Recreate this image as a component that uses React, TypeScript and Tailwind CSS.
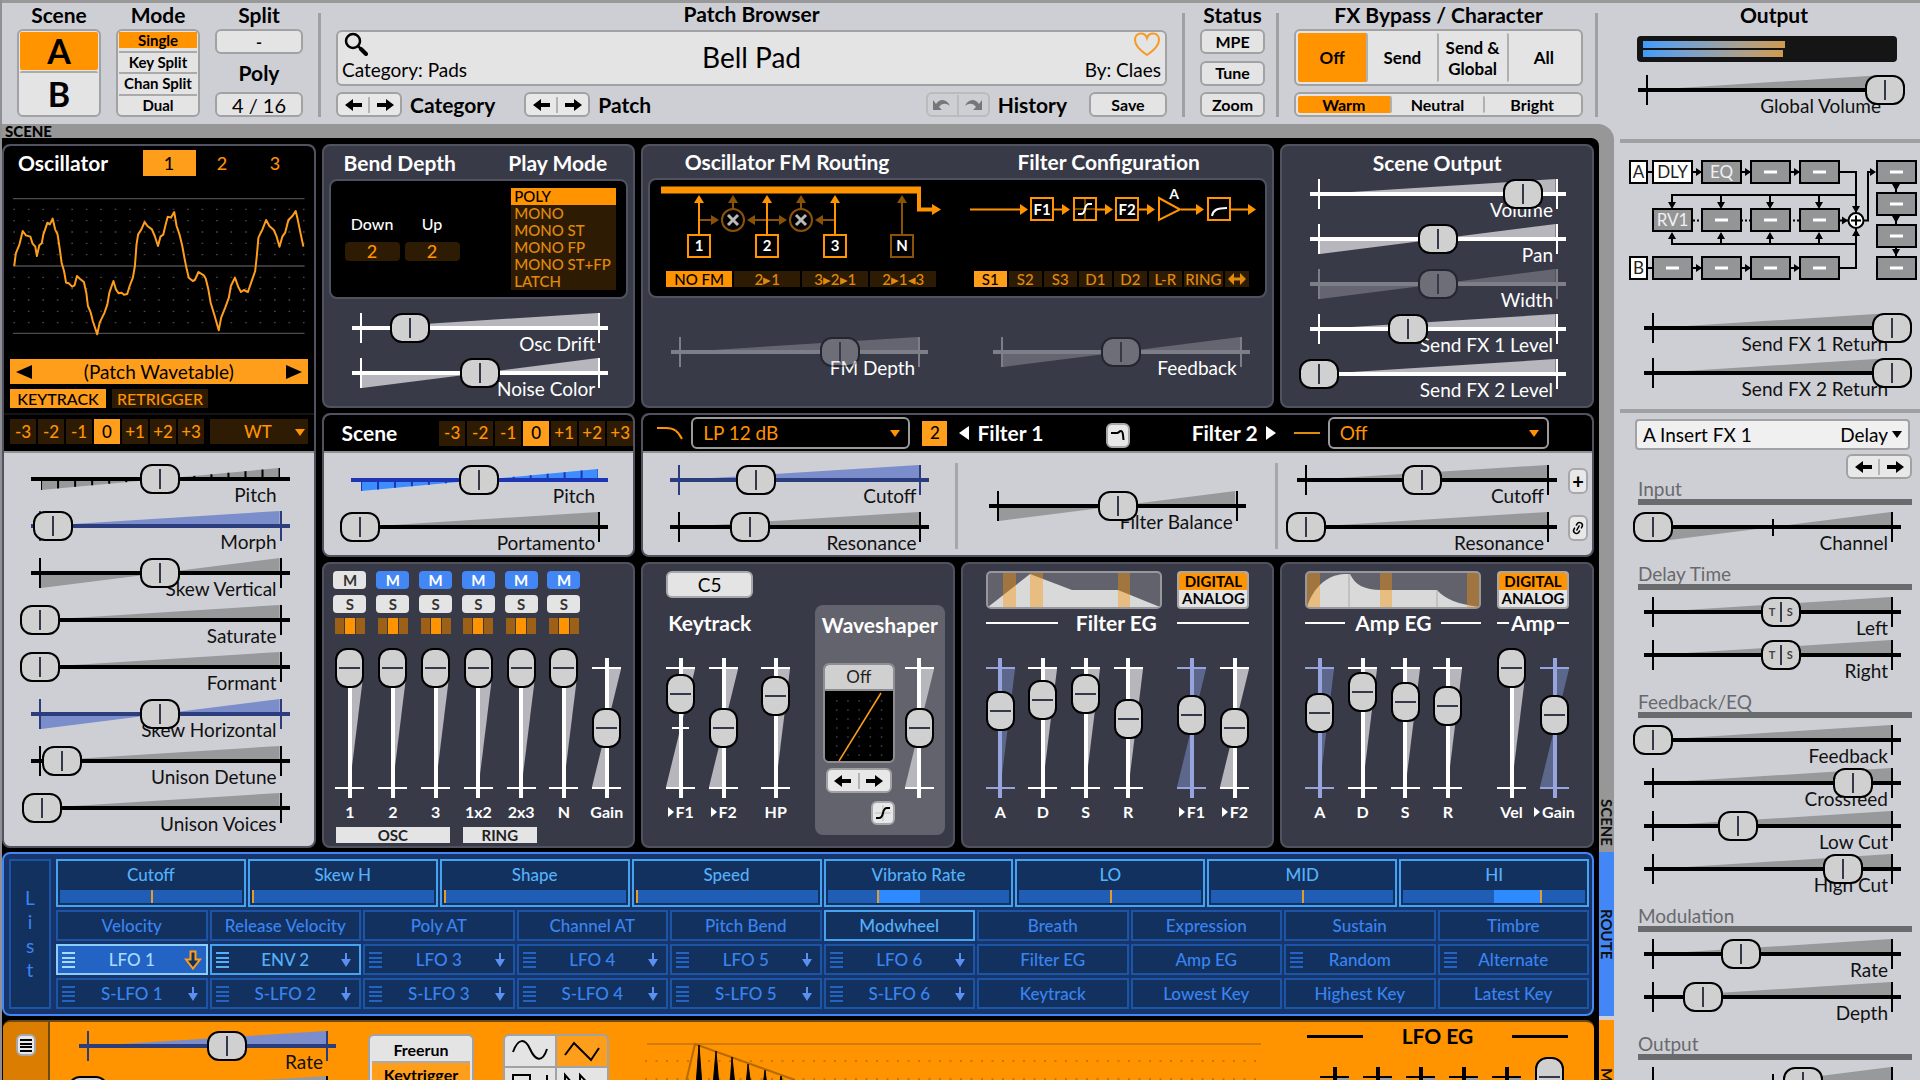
import { useId, useState } from "react";
import type { ReactNode } from "react";
import { clsx } from "clsx";
import { Link2 } from "lucide-react";

type Tone = "light" | "dark" | "mod" | "modDark" | "blue";

const TONES: Record<Tone, { line: string; tick: string; wedge: string }> = {
  light: { line: "bg-black", tick: "border-black", wedge: "text-[#98999b]" },
  dark: { line: "bg-white", tick: "border-white", wedge: "text-[#b6b6bc]" },
  mod: { line: "bg-[#2b3d7d]", tick: "border-[#2b3d7d]", wedge: "text-[#7b8ecb]" },
  modDark: { line: "bg-[#97a4dd]", tick: "border-[#97a4dd]", wedge: "text-[#5c678c]" },
  blue: { line: "bg-[#1b35b4]", tick: "border-transparent", wedge: "text-[#3d8dff]" },
};

const hThumb =
  "[&::-webkit-slider-thumb]:h-[30px] [&::-webkit-slider-thumb]:w-10 [&::-webkit-slider-thumb]:appearance-none [&::-webkit-slider-thumb]:rounded-xl [&::-webkit-slider-thumb]:border-2 [&::-webkit-slider-thumb]:border-black [&::-webkit-slider-thumb]:bg-[#d0d0d0] [&::-webkit-slider-thumb]:bg-[linear-gradient(#35384a,#35384a)] [&::-webkit-slider-thumb]:bg-[length:2px_20px] [&::-webkit-slider-thumb]:bg-center [&::-webkit-slider-thumb]:bg-no-repeat";
const vThumb =
  "[&::-webkit-slider-thumb]:h-10 [&::-webkit-slider-thumb]:w-[29px] [&::-webkit-slider-thumb]:appearance-none [&::-webkit-slider-thumb]:rounded-xl [&::-webkit-slider-thumb]:border-2 [&::-webkit-slider-thumb]:border-black [&::-webkit-slider-thumb]:bg-[#d0d0d0] [&::-webkit-slider-thumb]:bg-[linear-gradient(#35384a,#35384a)] [&::-webkit-slider-thumb]:bg-[length:21px_2px] [&::-webkit-slider-thumb]:bg-center [&::-webkit-slider-thumb]:bg-no-repeat";

interface SliderProps {
  label: string;
  value: number;
  tone?: Tone;
  bipolar?: boolean;
  stepped?: boolean;
  midTick?: boolean;
  sync?: boolean;
  disabled?: boolean;
  className?: string;
}

function Slider({ label, value, tone = "light", bipolar, stepped, midTick, sync, disabled, className }: SliderProps) {
  const id = useId();
  const t = TONES[tone];
  const steps = [1, 2, 3, 4, 5, 6, 7];
  return (
    <div className={clsx("flex w-full flex-col", className || "h-[45px]")}>
      <div className={clsx("relative grid h-[30px] shrink-0", disabled && "opacity-35")}>
        <span className={clsx("col-start-1 row-start-1 mx-[19px] border-x-2", stepped ? "border-transparent" : t.tick)}>
          <svg viewBox="0 0 100 30" preserveAspectRatio="none" className={clsx("block h-[30px] w-full", t.wedge)}>
            {stepped ? (
              <>
                <polygon points="0,15 0,26 50,15 100,4 100,15" fill="currentColor" />
                {steps.map((s) => (
                  <g key={s} stroke={tone === "blue" ? "#1b35b4" : "#000"} strokeWidth="2">
                    <path vectorEffect="non-scaling-stroke" d={`M${50 - s * 7.14} 15v${s * 1.57}`} />
                    <path vectorEffect="non-scaling-stroke" d={`M${50 + s * 7.14} 15v-${s * 1.57}`} />
                  </g>
                ))}
              </>
            ) : bipolar ? (
              <path d="M0 15V30L50 15L100 0V15Z" fill="currentColor" />
            ) : (
              <path d="M0 15L100 0V15Z" fill="currentColor" />
            )}
          </svg>
        </span>
        {midTick && <span className="col-start-1 row-start-1 h-[17px] w-0.5 self-center justify-self-center bg-black" />}
        <span className={clsx("col-start-1 row-start-1 mx-[11px] h-1 self-center", t.line)} />
        <input
          id={id}
          type="range"
          min={0}
          max={1000}
          defaultValue={value * 1000}
          disabled={disabled}
          className={clsx("z-10 col-start-1 row-start-1 h-[30px] w-full appearance-none bg-transparent", hThumb)}
        />
        {sync && (
          <span
            className="pointer-events-none absolute top-[7px] z-20 flex w-6 -translate-x-1/2 justify-between text-[11px] leading-4 font-bold text-[#444]"
            style={{ left: `calc(20px + (100% - 40px) * ${value})` }}
          >
            <span>T</span>
            <span>S</span>
          </span>
        )}
      </div>
      <label
        htmlFor={id}
        className={clsx("-mt-[9px] mr-6 text-right text-[19px] leading-5", tone === "dark" ? "text-white" : "text-[#111]")}
      >
        {label}
      </label>
    </div>
  );
}

interface FaderProps {
  label: ReactNode;
  name: string;
  value: number;
  tone?: Tone;
  bipolar?: boolean;
  midTick?: boolean;
}

function Fader({ label, name, value, tone = "dark", bipolar, midTick }: FaderProps) {
  const id = useId();
  const t = TONES[tone];
  return (
    <div className="flex w-[29px] flex-col items-center">
      <div className="grid h-40 w-[29px]">
        <span className={clsx("col-start-1 row-start-1 my-[19px] border-y-2", t.tick)}>
          <svg viewBox="0 0 30 118" preserveAspectRatio="none" className={clsx("block h-[118px] w-full", t.wedge)}>
            <path fill="currentColor" d={bipolar ? "M15 0H30L15 59L0 118H15Z" : "M15 0H30L15 118Z"} />
          </svg>
        </span>
        {midTick && <span className="col-start-1 row-start-1 h-0.5 w-[17px] self-center justify-self-center bg-white" />}
        <span className={clsx("col-start-1 row-start-1 my-2.5 w-1 justify-self-center", t.line)} />
        <input
          id={id}
          aria-label={name}
          type="range"
          min={0}
          max={1000}
          defaultValue={value * 1000}
          className={clsx(
            "z-10 col-start-1 row-start-1 h-40 w-[29px] appearance-none bg-transparent [direction:rtl] [writing-mode:vertical-lr]",
            vThumb
          )}
        />
      </div>
      <label htmlFor={id} className="-mt-1.5 flex h-5 items-center gap-0.5 text-base leading-5 font-bold whitespace-nowrap">
        {label}
      </label>
    </div>
  );
}

const To = ({ children }: { children: string }) => (
  <>
    <svg viewBox="0 0 6 10" className="h-2.5 w-1.5 fill-current">
      <path d="M0 0L6 5L0 10Z" />
    </svg>
    {children}
  </>
);

function Caret({ className }: { className?: string }) {
  return (
    <svg viewBox="0 0 10 7" className={clsx("pointer-events-none h-[7px] w-2.5 fill-current", className)}>
      <path d="M0 0H10L5 7Z" />
    </svg>
  );
}

const Arrow = ({ left }: { left?: boolean }) => (
  <svg viewBox="0 0 17 12" className={clsx("h-3 w-[17px]", left && "rotate-180")}>
    <path d="M0 4H9V0L17 6L9 12V8H0Z" />
  </svg>
);

function PrevNext({ name, className }: { name: string; className?: string }) {
  return (
    <div className={clsx("flex h-[25px] w-[66px] items-center rounded-md border-2 border-[#a2a2a4] bg-[#e8e8e8]", className)}>
      <button aria-label={`Previous ${name}`} className="flex h-4 flex-1 items-center justify-center border-r-2 border-[#b4b4b4]">
        <Arrow left />
      </button>
      <button aria-label={`Next ${name}`} className="flex h-4 flex-1 items-center justify-center">
        <Arrow />
      </button>
    </div>
  );
}

const headBtn = "rounded-md border-2 border-[#a2a2a4] bg-[#e4e4e5] text-base leading-5 font-bold";
const headTitle = "h-6 text-center text-[21px] leading-5 font-bold whitespace-nowrap";

function Header() {
  const [scene, setScene] = useState("A");
  return (
    <header className="flex h-[124px] gap-[15px] border-t-[3px] border-[#999] pt-0.5 pr-4 pb-[7px] pl-[15px]">
      <div className="flex w-[84px] flex-col">
        <h2 className={headTitle}>Scene</h2>
        <div className="flex flex-1 flex-col rounded-md border-2 border-[#a2a2a4] bg-[#e4e4e5] p-px">
          {["A", "B"].map((s) => (
            <button
              key={s}
              onClick={() => setScene(s)}
              className={clsx(
                "h-[38px] rounded-xs text-[34px] leading-9 font-bold",
                s === "B" && "mt-px flex-1 border-t-2 border-[#aaa]",
                scene === s && "bg-[#ff9300]"
              )}
            >
              {s}
            </button>
          ))}
        </div>
      </div>
      <div className="flex w-[84px] flex-col">
        <h2 className={headTitle}>Mode</h2>
        <div className="flex flex-1 flex-col items-stretch justify-between rounded-md border-2 border-[#a2a2a4] bg-[#e4e4e5] px-px pt-px pb-0.5">
          {["Single", "Key Split", "Chan Split", "Dual"].map((m, i) => (
            <div key={m} className={clsx("flex flex-col", i > 0 && "border-t-2 border-[#aaa] pt-px")}>
              <button className={clsx("h-4 text-[15px] leading-4 font-bold", i === 0 && "bg-[#ff9300]")}>{m}</button>
            </div>
          ))}
        </div>
      </div>
      <div className="flex w-[88px] flex-col">
        <h2 className={headTitle}>Split</h2>
        <button className={clsx(headBtn, "h-[25px]")}>-</button>
        <h2 className="flex flex-1 items-center justify-center text-[21px] leading-5 font-bold">Poly</h2>
        <button className="h-[25px] rounded-md border-2 border-[#a2a2a4] bg-[#e4e4e5] text-xl leading-5">4 / 16</button>
      </div>
      <span className="mt-2 w-[3px] bg-[#a0a0a3]" />
      <div className="flex min-w-0 flex-1 flex-col">
        <h2 className="h-[25px] text-center text-[21px] leading-[18px] font-bold">Patch Browser</h2>
        <div className="grid h-14 grid-cols-3 items-center rounded-md border-2 border-[#a2a2a4] bg-[#e4e4e5] px-1">
          <div className="flex flex-col justify-between">
            <button aria-label="Search" className="ml-0.5 w-6">
              <svg viewBox="0 0 24 24" className="size-6 fill-none stroke-black">
                <circle cx="9" cy="9" r="7" strokeWidth="2.5" />
                <path d="M14 14L18 18" strokeWidth="2.5" />
                <path d="M17 17L22 22" strokeWidth="4" strokeLinecap="round" />
              </svg>
            </button>
            <span className="text-[19px] leading-7">Category: Pads</span>
          </div>
          <span className="pb-0.5 text-center text-[28px] leading-8">Bell Pad</span>
          <div className="flex flex-col items-end justify-between">
            <button aria-label="Favorite">
              <svg viewBox="0 0 28 24" className="h-6 w-7 fill-none stroke-[#f59a23]" strokeWidth="2">
                <path d="M14 23C8 19 2 13 2 8C2 4 4.500 1.500 8 1.500C11 1.500 13 3 14 6C15 3 17 1.500 20 1.500C23.500 1.500 26 4 26 8C26 13 20 19 14 23Z" />
              </svg>
            </button>
            <span className="text-[19px] leading-7">By: Claes</span>
          </div>
        </div>
        <div className="mt-1.5 flex items-center text-[21px] leading-5 font-bold">
          <PrevNext name="category" />
          <span className="mr-[29px] ml-2">Category</span>
          <PrevNext name="patch" />
          <span className="ml-2">Patch</span>
          <div className="ml-auto flex h-[25px] w-16 items-center rounded-md border-2 border-[#bbb] text-[#777]">
            <button aria-label="Undo" className="flex h-5 flex-1 items-center justify-center border-r-2 border-[#bbb]">
              <svg viewBox="0 0 18 12" className="h-3 w-[18px] fill-current">
                <path d="M0 1L0 11L9 11L6 8C9 4 13 4 17 7C14 0 7 -1 3 5Z" />
              </svg>
            </button>
            <button aria-label="Redo" className="flex h-5 flex-1 items-center justify-center">
              <svg viewBox="0 0 18 12" className="h-3 w-[18px] -scale-x-100 fill-current">
                <path d="M0 1L0 11L9 11L6 8C9 4 13 4 17 7C14 0 7 -1 3 5Z" />
              </svg>
            </button>
          </div>
          <span className="mx-2">History</span>
          <button className={clsx(headBtn, "ml-3.5 h-[25px] w-[78px]")}>Save</button>
        </div>
      </div>
      <span className="mt-2 w-[3px] bg-[#a0a0a3]" />
      <div className="flex w-[65px] flex-col">
        <h2 className={headTitle}>Status</h2>
        <div className="flex flex-1 flex-col justify-between">
          {["MPE", "Tune", "Zoom"].map((b) => (
            <button key={b} className={clsx(headBtn, "h-[25px]")}>
              {b}
            </button>
          ))}
        </div>
      </div>
      <span className="mt-2 -ml-1 w-[3px] bg-[#a0a0a3]" />
      <div className="-mr-[3px] flex w-[289px] flex-col">
        <h2 className={headTitle}>FX Bypass / Character</h2>
        <div className="grid h-[57px] grid-cols-4 divide-x-2 divide-[#b0b0b0] rounded-md border-2 border-[#a2a2a4] bg-[#e4e4e5] p-0.5">
          {["Off", "Send", "Send & Global", "All"].map((b, i) => (
            <button key={b} className={clsx("rounded-xs px-1 text-[17px] leading-[21px] font-bold", i === 0 && "bg-[#ff9300]")}>
              {b}
            </button>
          ))}
        </div>
        <div className="mt-1.5 grid h-[25px] grid-cols-3 divide-x-2 divide-[#b0b0b0] rounded-md border-2 border-[#a2a2a4] bg-[#e4e4e5] p-0.5">
          {["Warm", "Neutral", "Bright"].map((b, i) => (
            <button key={b} className={clsx("rounded-xs text-base leading-4 font-bold", i === 0 && "bg-[#ff9300]")}>
              {b}
            </button>
          ))}
        </div>
      </div>
      <span className="mt-2 w-[3px] bg-[#a0a0a3]" />
    </header>
  );
}

const panel = "rounded-lg border-2 border-[#50535f] bg-[#383a48]";
const screen = "rounded-lg border-2 border-[#50535f] bg-black";
const title = "text-[21px] leading-6 font-bold whitespace-nowrap";

function Octaves() {
  return (
    <div className="flex gap-0.5">
      {["-3", "-2", "-1", "0", "+1", "+2", "+3"].map((o) => (
        <button
          key={o}
          className={clsx(
            "h-[25px] w-[26px] text-[17px] leading-5 font-medium",
            o === "0" ? "bg-[#ff9e1a] text-black" : "bg-[#2e1b03] text-[#ff9300]"
          )}
        >
          {o}
        </button>
      ))}
    </div>
  );
}

const WAVE =
  "35,800 39,762 48,735 56,695 64,708 75,712 80,732 87,742 91,770 97,738 103,732 107,705 112,688 117,670 123,675 130,658 136,690 142,705 147,745 152,790 158,815 163,850 170,852 178,862 184,858 190,830 197,838 207,848 213,880 217,920 224,940 229,965 240,1005 246,970 258,940 265,915 270,880 280,845 286,870 293,882 300,880 306,886 314,884 320,860 328,835 333,800 337,735 341,705 349,690 357,668 364,680 375,690 382,710 390,740 396,712 403,706 408,680 414,652 422,655 430,638 436,680 443,705 450,740 456,780 461,810 466,835 476,845 481,842 490,818 503,828 508,838 514,868 520,910 530,950 540,993 546,955 556,925 565,895 570,860 580,835 588,862 595,878 602,872 612,878 620,850 630,815 634,770 638,715 648,690 657,662 665,680 676,692 683,712 690,742 697,712 704,700 712,662 722,650 730,635 735,660 740,690 749,742";

function Oscillator() {
  const [osc, setOsc] = useState(1);
  return (
    <section className="row-span-3 flex flex-col overflow-hidden rounded-lg border-2 border-[#50535f] bg-[#cecfd5]">
      <div className="flex h-[305px] flex-col bg-black px-1.5 pt-1">
        <div className="flex items-center justify-between pr-1.5 pl-2">
          <h2 className={clsx(title, "text-white")}>Oscillator</h2>
          <div className="flex">
            {[1, 2, 3].map((n) => (
              <button
                key={n}
                onClick={() => setOsc(n)}
                className={clsx("h-[26px] w-[53px] text-lg leading-5 font-medium", osc === n ? "bg-[#ff9e1a] text-black" : "text-[#ff9300]")}
              >
                {n}
              </button>
            ))}
          </div>
        </div>
        <svg viewBox="32 590 720 420" preserveAspectRatio="none" className="mx-[3px] mt-5 h-[140px] w-auto shrink-0">
          {[598, 800, 1002].map((y) => (
            <path key={y} d={`M32 ${y}H752`} stroke="#4b4b4b" strokeWidth="4" />
          ))}
          {[630, 664, 698, 732, 766, 834, 868, 902, 936, 970].map((y) => (
            <path key={y} d={`M33 ${y}H752`} stroke="#4a4a4a" strokeWidth="4" strokeDasharray="4 31.75" />
          ))}
          <polyline points={WAVE} fill="none" stroke="#ff9e1a" strokeWidth="2" vectorEffect="non-scaling-stroke" strokeLinejoin="round" />
        </svg>
        <div className="mt-[23px] flex h-[25px] items-center justify-between bg-[#ff9e1a] px-1.5">
          <button aria-label="Previous wavetable">
            <svg viewBox="0 0 16 14" className="h-3.5 w-4">
              <path d="M16 0V14L0 7Z" />
            </svg>
          </button>
          <span className="text-[19px] leading-6">(Patch Wavetable)</span>
          <button aria-label="Next wavetable">
            <svg viewBox="0 0 16 14" className="h-3.5 w-4">
              <path d="M0 0V14L16 7Z" />
            </svg>
          </button>
        </div>
        <div className="mt-[5px] flex gap-1.5">
          <button className="h-[19px] w-24 bg-[#ff9e1a] text-base leading-[19px] font-medium">KEYTRACK</button>
          <button className="h-[19px] w-24 bg-[#2e1b03] text-base leading-[19px] font-medium text-[#ff9300]">RETRIGGER</button>
        </div>
        <div className="-mx-1.5 mt-[5px] border-t-2 border-[#141414]" />
        <div className="mt-1 flex justify-between gap-1.5">
          <Octaves />
          <div className="relative min-w-0 flex-1">
            <select
              aria-label="Oscillator type"
              className="block h-[25px] w-full appearance-none bg-[#2e1b03] pl-[34px] text-[17px] leading-5 font-medium text-[#ff9300]"
            >
              <option>WT</option>
            </select>
            <Caret className="absolute top-2.5 right-[3px] text-[#ff9300]" />
          </div>
        </div>
      </div>
      <div className="flex flex-1 flex-col border-t-2 border-[#8f9096] pt-[11px] pr-[13px] pl-4">
        <Slider className="h-[47px]" label="Pitch" value={0.5} stepped />
        <Slider className="h-[47px]" label="Morph" value={0.055} tone="mod" />
        <Slider className="h-[47px]" label="Skew Vertical" value={0.5} bipolar />
        <Slider className="h-[47px]" label="Saturate" value={0} />
        <Slider className="h-[47px]" label="Formant" value={0} />
        <Slider className="h-[47px]" label="Skew Horizontal" value={0.5} bipolar tone="mod" />
        <Slider className="h-[47px]" label="Unison Detune" value={0.09} />
        <Slider className="h-[47px]" label="Unison Voices" value={0.01} />
      </div>
    </section>
  );
}

function PlayMode() {
  return (
    <section className={clsx(panel, "px-[5px] pt-[5px]")}>
      <div className="flex justify-between pr-[21px] pl-[15px]">
        <h2 className={title}>Bend Depth</h2>
        <h2 className={title}>Play Mode</h2>
      </div>
      <div className={clsx(screen, "mt-1 flex h-[120px] items-center justify-between pr-2.5 pl-3.5")}>
        <div className="-mt-1 flex gap-[5px] text-center text-base leading-5 font-medium">
          {["Down", "Up"].map((d) => (
            <label key={d} className="flex w-[55px] flex-col gap-2">
              {d}
              <input
                defaultValue="2"
                className="h-[19px] w-[55px] rounded-sm bg-[#2e1b03] text-center text-lg leading-5 text-[#ff9300]"
              />
            </label>
          ))}
        </div>
        <div className="flex w-[105px] flex-col bg-[#2e1b03]">
          {["POLY", "MONO", "MONO ST", "MONO FP", "MONO ST+FP", "LATCH"].map((m, i) => (
            <button
              key={m}
              className={clsx(
                "h-[17px] pl-[3px] text-left text-[15px] leading-[17px] font-medium whitespace-nowrap",
                i === 0 ? "bg-[#ff9300] text-black" : "text-[#e08a10]"
              )}
            >
              {m}
            </button>
          ))}
        </div>
      </div>
      <div className="mt-3.5 pr-[9px] pl-3">
        <Slider label="Osc Drift" value={0.205} tone="dark" />
        <Slider label="Noise Color" value={0.5} tone="dark" bipolar />
      </div>
    </section>
  );
}

const FM_BOXES = [
  { x: 699, t: "1" },
  { x: 767, t: "2" },
  { x: 835, t: "3" },
  { x: 902, t: "N" },
];

function FmDiagram() {
  return (
    <svg viewBox="656 182 290 88" className="mt-px h-[88px] w-[290px]" fill="none" stroke="#ff9300" strokeWidth="2">
      <path d="M661 191H919V210.500H934" strokeWidth="4" />
      <path d="M661 191H921" strokeWidth="7" />
      <path d="M932 205L941 210.500L932 216Z" fill="#ff9300" stroke="none" />
      <g stroke="#8a5206" fill="#8a5206">
        {[733, 801].map((x) => (
          <g key={x}>
            <circle cx={x} cy="221" r="11" fill="none" />
            <path d={`M${x} 210V202`} />
            <path d={`M${x - 5} 204L${x} 196L${x + 5} 204Z`} stroke="none" />
            <path d={`M${x - 5} 216L${x + 5} 226M${x + 5} 216L${x - 5} 226`} stroke="#b9b9b9" strokeWidth="3" />
            <path d={`M${x - 34} 221H${x - 20}M${x + 34} 221H${x + 20}`} />
            <path d={`M${x - 22} 216L${x - 14} 221L${x - 22} 226ZM${x + 22} 216L${x + 14} 221L${x + 22} 226Z`} stroke="none" />
          </g>
        ))}
      </g>
      {FM_BOXES.map((b) => (
        <g key={b.t} stroke={b.t === "N" ? "#8a5206" : "#ff9300"}>
          <path d={`M${b.x} 235V203`} />
          <path d={`M${b.x - 5} 204L${b.x} 196L${b.x + 5} 204Z`} fill={b.t === "N" ? "#8a5206" : "#ff9300"} stroke="none" />
          <rect x={b.x - 11} y="236" width="22" height="22" />
          <text x={b.x} y="252" textAnchor="middle" fontSize="15" fontWeight="700" fill="#fff" stroke="none">
            {b.t}
          </text>
        </g>
      ))}
    </svg>
  );
}

function FilterDiagram() {
  return (
    <svg viewBox="966 182 294 88" className="mt-px h-[88px] w-[294px]" fill="none" stroke="#ff9300" strokeWidth="2">
      <path d="M970 210.500H1022M1054 210.500H1064M1097 210.500H1106M1139 210.500H1148M1181 210.500H1198M1231 210.500H1249" />
      {[1028, 1070, 1113, 1155, 1204, 1256].map((x) => (
        <path key={x} d={`M${x - 8} 205L${x} 210.500L${x - 8} 216Z`} fill="#ff9300" stroke="none" />
      ))}
      <rect x="1031" y="199" width="22" height="22" />
      <rect x="1074" y="199" width="22" height="22" />
      <rect x="1116" y="199" width="22" height="22" />
      <rect x="1208" y="199" width="22" height="22" />
      <path d="M1159 199L1180 210.500L1159 221Z" />
      <path d="M1085 199V221M1074 210H1096" strokeWidth="1" />
      <path d="M1078 215H1081C1087 215 1083 205 1089 205H1092" stroke="#fff" />
      <path d="M1212 217C1213 211 1217 209 1227 209" stroke="#fff" />
      <g fill="#fff" stroke="none" textAnchor="middle" fontSize="15" fontWeight="700">
        <text x="1042" y="216">F1</text>
        <text x="1127" y="216">F2</text>
        <text x="1174" y="200" fontSize="14">A</text>
      </g>
    </svg>
  );
}

function Routing() {
  return (
    <section className={clsx(panel, "col-span-2 px-[5px] pt-1")}>
      <div className="grid grid-cols-2 text-center">
        <h2 className={clsx(title, "pr-8")}>Oscillator FM Routing</h2>
        <h2 className={clsx(title, "pr-2")}>Filter Configuration</h2>
      </div>
      <div className={clsx(screen, "mt-1 grid h-[120px] grid-cols-2 overflow-hidden px-1.5")}>
        <div>
          <FmDiagram />
          <div className="mt-0.5 flex w-[280px] gap-0.5 pl-2.5">
            {["NO FM", "2▸1", "3▸2▸1", "2▸1◂3"].map((b, i) => (
              <button
                key={b}
                className={clsx(
                  "h-4 flex-1 text-[15px] leading-4 font-medium",
                  i === 0 ? "bg-[#ff9300] text-black" : "bg-[#2e1b03] text-[#e08a10]"
                )}
              >
                {b}
              </button>
            ))}
          </div>
        </div>
        <div className="pl-2">
          <FilterDiagram />
          <div className="mt-0.5 flex gap-0.5 pl-2">
            {["S1", "S2", "S3", "D1", "D2", "L-R", "RING", "↔"].map((b, i) => (
              <button
                key={b}
                className={clsx(
                  "h-4 text-[15px] leading-4 font-medium",
                  i === 6 ? "w-[39px]" : i === 7 ? "w-6" : "w-[33px]",
                  i === 0 ? "bg-[#ff9e1a] text-black" : "bg-[#2e1b03] text-[#e08a10]"
                )}
              >
                {i === 7 ? (
                  <svg viewBox="0 0 18 12" className="mx-auto h-3 w-[18px] fill-current" aria-label="Stereo">
                    <path d="M0 6L6 0V4.500H12V0L18 6L12 12V7.500H6V12Z" />
                  </svg>
                ) : (
                  b
                )}
              </button>
            ))}
          </div>
        </div>
      </div>
      <div className="mt-[39px] grid grid-cols-2 text-white">
        <div className="pr-2.5 pl-3">
          <div className="max-w-[279px]">
            <Slider label="FM Depth" value={0.67} tone="dark" disabled />
          </div>
        </div>
        <div className="pl-6">
          <div className="max-w-[279px]">
            <Slider label="Feedback" value={0.5} tone="dark" bipolar disabled />
          </div>
        </div>
      </div>
    </section>
  );
}

function SceneOutput() {
  return (
    <section className={clsx(panel, "pt-[5px]")}>
      <h2 className={clsx(title, "h-7 text-center")}>Scene Output</h2>
      <div className="pr-[15px] pl-[17px]">
        <Slider label="Volume" value={0.856} tone="dark" />
        <Slider label="Pan" value={0.5} tone="dark" bipolar />
        <Slider label="Width" value={0.5} tone="dark" bipolar disabled />
        <Slider label="Send FX 1 Level" value={0.374} tone="dark" />
        <Slider label="Send FX 2 Level" value={0} tone="dark" />
      </div>
    </section>
  );
}

function ScenePitch() {
  return (
    <section className="flex flex-col overflow-hidden rounded-lg border-2 border-[#50535f] bg-[#cecfd5]">
      <div className="flex h-9 shrink-0 items-center justify-between bg-black pl-[18px]">
        <h2 className={clsx(title, "text-white")}>Scene</h2>
        <Octaves />
      </div>
      <div className="shrink-0 border-t-2 border-[#8f9096] pt-3 pr-3.5 pl-4">
        <Slider className="h-[47px]" label="Pitch" value={0.5} stepped tone="blue" />
        <Slider className="h-[47px]" label="Portamento" value={0} />
      </div>
    </section>
  );
}

function FilterSelect({ name, value }: { name: string; value: string }) {
  return (
    <div className="relative min-w-0 flex-1">
      <select
        aria-label={name}
        className="block h-8 w-full appearance-none rounded-md border-2 border-[#9a9a9a] bg-black pl-2.5 text-[19px] leading-6 text-[#ff9300]"
      >
        <option>{value}</option>
      </select>
      <Caret className="absolute top-[13px] right-2.5 text-[#ff9300]" />
    </div>
  );
}

const smallBtn = "flex items-center justify-center rounded-md border-2 border-[#a8a8aa] bg-[#e8e8e8]";

function Filters() {
  return (
    <section className="col-span-3 flex flex-col overflow-hidden rounded-lg border-2 border-[#50535f] bg-[#cecfd5]">
      <div className="grid h-9 shrink-0 grid-cols-3 items-center bg-black text-white">
        <div className="flex items-center pl-3.5">
          <svg viewBox="0 0 26 14" className="mr-2 h-3.5 w-[26px] fill-none stroke-[#ff9300]" strokeWidth="2">
            <path d="M0 2H9C17 2 21 5 25 13" />
          </svg>
          <FilterSelect name="Filter 1 type" value="LP 12 dB" />
          <button className="mx-3 h-[25px] w-[25px] bg-[#ff9e1a] text-[17px] leading-5 font-medium text-black">2</button>
        </div>
        <div className={clsx(title, "flex items-center justify-between")}>
          <span className="flex items-center gap-2">
            <svg viewBox="0 0 10 14" className="h-3.5 w-2.5 fill-white">
              <path d="M10 0V14L0 7Z" />
            </svg>
            Filter 1
          </span>
          <button aria-label="Filter link" className={clsx(smallBtn, "mt-1 h-[25px] w-6")}>
            <svg viewBox="0 0 14 12" className="h-3 w-3.5 fill-none stroke-black" strokeWidth="2">
              <path d="M0 4H6C8 4 8 2 10 2C12 2 12 6 12.500 11" />
            </svg>
          </button>
          <span className="flex items-center gap-2">
            Filter 2
            <svg viewBox="0 0 10 14" className="h-3.5 w-2.5 fill-white">
              <path d="M0 0V14L10 7Z" />
            </svg>
          </span>
        </div>
        <div className="flex items-center pr-[43px] pl-[18px]">
          <span className="mr-2 h-0.5 w-[26px] bg-[#e08a10]" />
          <FilterSelect name="Filter 2 type" value="Off" />
        </div>
      </div>
      <div className="grid flex-1 grid-cols-3 border-t-2 border-[#8f9096]">
        <div className="pt-3 pr-[19px] pl-4">
          <Slider className="h-[47px]" label="Cutoff" value={0.32} tone="mod" />
          <Slider className="h-[47px]" label="Resonance" value={0.294} />
        </div>
        <div className="-mr-0.5 my-2.5 -ml-1 border-x-[3px] border-[#a7a7aa] pt-7 pr-[18px] pl-5">
          <Slider label="Filter Balance" value={0.5} bipolar />
        </div>
        <div className="flex pt-3 pr-1 pl-2.5">
          <div className="min-w-0 flex-1">
            <Slider className="h-[47px]" label="Cutoff" value={0.48} />
            <Slider className="h-[47px]" label="Resonance" value={0} />
          </div>
          <div className="flex flex-col gap-[21px] pt-[3px]">
            <button aria-label="Add offset" className={clsx(smallBtn, "h-[26px] w-5 text-xl leading-4 font-bold")}>
              +
            </button>
            <button aria-label="Link resonance" className={clsx(smallBtn, "h-[26px] w-5")}>
              <Link2 className="size-3.5 -rotate-60" strokeWidth={2.5} />
            </button>
          </div>
        </div>
      </div>
    </section>
  );
}

function Mixer() {
  const channels = ["1", "2", "3", "1x2", "2x3", "N"];
  return (
    <section className={clsx(panel, "px-[5px] pt-[7px]")}>
      <div className="grid grid-cols-7">
        {channels.map((c, i) => (
          <div key={c} className="flex flex-col items-center">
            <button
              aria-label={`Mute ${c}`}
              className={clsx(
                "h-[18px] w-[33px] rounded-sm text-[15px] leading-[18px] font-bold",
                i === 0 ? "bg-[#e4e4e5] text-[#333]" : "bg-[#4287f5] text-white"
              )}
            >
              M
            </button>
            <button
              aria-label={`Solo ${c}`}
              className="mt-1.5 h-[18px] w-[33px] rounded-sm bg-[#e4e4e5] text-[15px] leading-[18px] font-bold text-[#333]"
            >
              S
            </button>
            <div className="mt-[5px] mb-3.5 flex h-4 gap-px">
              <span className="w-[9px] bg-[#9c6016]" />
              <span className="w-2.5 bg-[#ff9300]" />
              <span className="w-[9px] bg-[#9c6016]" />
            </div>
            <Fader name={`${c} level`} label={c} value={1} />
          </div>
        ))}
        <div className="flex flex-col items-center justify-end">
          <Fader name="Gain" label="Gain" value={0.5} bipolar />
        </div>
        <span className="col-span-3 mx-[7px] mt-[5px] h-4 bg-[#e4e4e5] text-center text-[15px] leading-4 font-bold text-[#222]">OSC</span>
        <span className="col-span-2 mx-1.5 mt-[5px] h-4 bg-[#e4e4e5] text-center text-[15px] leading-4 font-bold text-[#222]">RING</span>
      </div>
    </section>
  );
}

function Keytrack() {
  return (
    <section className={clsx(panel, "flex justify-between pt-[7px] pr-2 pl-[23px]")}>
      <div className="w-[124px]">
        <button className="block h-[27px] w-[87px] rounded-md border-2 border-[#a8a8aa] bg-[#e4e4e5] text-[19px] leading-5 text-black">
          C5
        </button>
        <h2 className={clsx(title, "mt-[13px] mb-[13px] w-[87px] text-center")}>Keytrack</h2>
        <div className="flex">
          <Fader name="Keytrack to filter 1" label={<To>F1</To>} value={0.78} bipolar midTick />
          <span className="w-3.5" />
          <Fader name="Keytrack to filter 2" label={<To>F2</To>} value={0.5} bipolar />
          <span className="ml-auto" />
          <Fader name="High pass" label="HP" value={0.77} />
        </div>
      </div>
      <div className="mt-[34px] flex h-[230px] w-[130px] flex-col rounded-lg bg-[#62636d] pt-2">
        <h2 className={clsx(title, "text-center")}>Waveshaper</h2>
        <div className="mt-[11px] flex justify-between pr-[11px] pl-2">
          <div className="flex flex-col items-center">
            <div className="mt-[15px] w-[72px] overflow-hidden rounded-md border-2 border-[#8e8e92] bg-black">
              <button className="block h-[26px] w-full border-b-2 border-[#8e8e92] bg-[#d0d0d0] text-[17px] leading-5 text-[#222]">
                Off
              </button>
              <svg viewBox="0 0 68 70" className="block h-[70px] w-full">
                {[10, 19, 28, 37, 46, 55, 64].map((y) => (
                  <path key={y} d={`M11 ${y}H60`} stroke="#444" strokeWidth="1.500" strokeDasharray="1.500 9.700" />
                ))}
                <path d="M14 70L56 2" stroke="#ff9e1a" strokeWidth="1.500" />
              </svg>
            </div>
            <PrevNext name="waveshaper" className="mt-[5px]" />
            <button aria-label="Waveshaper menu" className={clsx(smallBtn, "mt-2 h-6 w-6 self-end")}>
              <svg viewBox="0 0 16 16" className="size-4 fill-none stroke-black" strokeWidth="2">
                <path d="M8 0V16M0 8H16" stroke="#bbb" strokeWidth="1" />
                <path d="M1 13H4C10 13 6 3 12 3H15" />
              </svg>
            </button>
          </div>
          <Fader name="Waveshaper drive" label="" value={0.5} bipolar />
        </div>
      </div>
    </section>
  );
}

function EgMode() {
  return (
    <div className="flex h-[38px] w-[72px] flex-col overflow-hidden rounded-sm border-2 border-[#a8a8aa] bg-[#e4e4e5] text-[15px] leading-[17px] font-bold text-black">
      <button className="flex-1 bg-[#ff9300]">DIGITAL</button>
      <button className="flex-1">ANALOG</button>
    </div>
  );
}

function FilterEg() {
  return (
    <section className={clsx(panel, "flex justify-between pt-[7px] pr-[23px] pl-[23px]")}>
      <div className="w-[176px]">
        <svg viewBox="0 0 176 38" className="block h-[38px] w-[176px]">
          <rect x="1" y="1" width="174" height="36" rx="4" fill="#61626c" />
          <path d="M2 36L44 3L86 19H132L174 36Z" fill="#d9d9d9" />
          <path d="M17 2H30V36H17ZM44 2H57V36H44ZM132 2H144V36H132Z" fill="#ff9300" fillOpacity="0.4" />
          <rect x="1" y="1" width="174" height="36" rx="4" fill="none" stroke="#98989c" strokeWidth="2" />
        </svg>
        <div className="mt-px mb-[13px] flex h-[25px] items-center">
          <span className="h-0.5 w-[72px] bg-white" />
          <h2 className={clsx(title, "pl-[18px]")}>Filter EG</h2>
        </div>
        <div className="flex w-[157px] justify-between">
          <Fader name="Filter attack" label="A" value={0.645} tone="modDark" />
          <Fader name="Filter decay" label="D" value={0.733} />
          <Fader name="Filter sustain" label="S" value={0.785} />
          <Fader name="Filter release" label="R" value={0.573} />
        </div>
      </div>
      <div className="w-[72px]">
        <EgMode />
        <div className="mt-px mb-[13px] flex h-[25px] items-center">
          <span className="h-0.5 flex-1 bg-white" />
        </div>
        <div className="flex justify-between">
          <Fader name="Filter EG to filter 1" label={<To>F1</To>} value={0.61} tone="modDark" bipolar />
          <Fader name="Filter EG to filter 2" label={<To>F2</To>} value={0.5} bipolar />
        </div>
      </div>
    </section>
  );
}

function AmpEg() {
  return (
    <section className={clsx(panel, "flex justify-between pt-[7px] pr-[23px] pl-[23px]")}>
      <div className="w-[176px]">
        <svg viewBox="0 0 176 38" className="block h-[38px] w-[176px]">
          <rect x="1" y="1" width="174" height="36" rx="4" fill="#61626c" />
          <path d="M2 36C8 18 20 4 40 3H45C50 14 60 19 76 19H132C140 28 152 33 174 36Z" fill="#d9d9d9" />
          <path d="M44 3V36M132 19V36" stroke="#aaa" strokeWidth="1" />
          <path d="M2 2H15V36H2ZM75 2H87V36H75ZM162 2H174V36H162Z" fill="#ff9300" fillOpacity="0.4" />
          <rect x="1" y="1" width="174" height="36" rx="4" fill="none" stroke="#98989c" strokeWidth="2" />
        </svg>
        <div className="mt-px mb-[13px] flex h-[25px] items-center gap-2.5">
          <span className="h-0.5 flex-1 bg-white" />
          <h2 className={title}>Amp EG</h2>
          <span className="h-0.5 flex-1 bg-white" />
        </div>
        <div className="flex w-[157px] justify-between">
          <Fader name="Amp attack" label="A" value={0.625} tone="modDark" />
          <Fader name="Amp decay" label="D" value={0.8} />
          <Fader name="Amp sustain" label="S" value={0.715} />
          <Fader name="Amp release" label="R" value={0.68} />
        </div>
      </div>
      <div className="w-[72px]">
        <EgMode />
        <div className="mt-px mb-[13px] flex h-[25px] items-center gap-0.5">
          <span className="h-0.5 flex-1 bg-white" />
          <h2 className={title}>Amp</h2>
          <span className="h-0.5 flex-1 bg-white" />
        </div>
        <div className="flex justify-between">
          <Fader name="Velocity" label="Vel" value={1} />
          <Fader name="Amp gain" label={<To>Gain</To>} value={0.61} tone="modDark" bipolar />
        </div>
      </div>
    </section>
  );
}

const MACROS = [
  { name: "Cutoff", at: 50, from: 50, to: 50 },
  { name: "Skew H", at: 0, from: 0, to: 0 },
  { name: "Shape", at: 0, from: 0, to: 0 },
  { name: "Speed", at: 0, from: 0, to: 0 },
  { name: "Vibrato Rate", at: 27, from: 27, to: 51 },
  { name: "LO", at: 50, from: 50, to: 50 },
  { name: "MID", at: 50, from: 50, to: 50 },
  { name: "HI", at: 75, from: 50, to: 75 },
];

const SOURCES = [
  ["Velocity", "Release Velocity", "Poly AT", "Channel AT", "Pitch Bend", "Modwheel", "Breath", "Expression", "Sustain", "Timbre"],
  ["LFO 1", "ENV 2", "LFO 3", "LFO 4", "LFO 5", "LFO 6", "Filter EG", "Amp EG", "Random", "Alternate"],
  ["S-LFO 1", "S-LFO 2", "S-LFO 3", "S-LFO 4", "S-LFO 5", "S-LFO 6", "Keytrack", "Lowest Key", "Highest Key", "Latest Key"],
].flat();

function Source({ name }: { name: string }) {
  const active = name === "LFO 1";
  const lit = name === "ENV 2" || name === "Modwheel";
  const arrow = /LFO|ENV/.test(name);
  const menu = arrow || name === "Random" || name === "Alternate";
  return (
    <button
      className={clsx(
        "relative flex h-[31px] items-center justify-center border-2 text-[17px] leading-5 font-medium whitespace-nowrap",
        active && "border-[#8ccdfb] bg-[#2263c4] text-[#a5dcff]",
        lit && "border-[#46a3ef] bg-[#12315f] text-[#55b0fa]",
        !active && !lit && "border-[#1d55a6] bg-[#12315f] text-[#3a84f2]"
      )}
    >
      {menu && (
        <svg
          viewBox="0 0 13 16"
          className={clsx("absolute left-1 h-4 w-[13px] fill-none stroke-current", !active && !lit && "text-[#2263c4]")}
          strokeWidth="2"
        >
          <path d="M0 1H13M0 6H13M0 10H13M0 15H13" />
        </svg>
      )}
      {name}
      {arrow &&
        (active ? (
          <svg viewBox="0 0 18 20" className="absolute right-1 h-5 w-[18px] fill-[#12315f] stroke-[#ff9e1a]" strokeWidth="2">
            <path d="M6.500 1.500H11.500V9.500H16L9 18.500L2 9.500H6.500Z" />
          </svg>
        ) : (
          <svg viewBox="0 0 10 14" className="absolute right-2 h-3.5 w-2.5 fill-[#5b8ff0]">
            <path d="M4 0H6V6H10L5 14L0 6H4Z" />
          </svg>
        ))}
    </button>
  );
}

function Route() {
  return (
    <section className="flex gap-[5px] rounded-lg border-2 border-[#4287f5] bg-[#17356b] p-[5px] pr-[3px]">
      <button className="flex w-[42px] flex-col items-center justify-center gap-1 border-2 border-[#1d55a6] bg-[#12315f] text-[19px] leading-5 text-[#3a84f2]">
        {["L", "i", "s", "t"].map((c) => (
          <span key={c}>{c}</span>
        ))}
      </button>
      <div className="min-w-0 flex-1">
        <div className="grid grid-cols-8 gap-0.5">
          {MACROS.map((m) => (
            <button key={m.name} className="flex h-12 flex-col border-2 border-[#46a3ef] bg-[#12315f] px-0.5 pb-0.5">
              <span className="w-full flex-1 text-center text-[17px] leading-7 font-medium text-[#55b0fa]">{m.name}</span>
              <span className="relative h-[13px] w-full bg-[#205db5]">
                <span className="absolute inset-y-0 bg-[#2e8bff]" style={{ left: `${m.from}%`, width: `${m.to - m.from}%` }} />
                <span className="absolute inset-y-0 w-0.5 bg-[#e59a2c]" style={{ left: `${m.at}%` }} />
              </span>
            </button>
          ))}
        </div>
        <div className="mt-[3px] grid grid-cols-10 gap-x-0.5 gap-y-[3px]">
          {SOURCES.map((s) => (
            <Source key={s} name={s} />
          ))}
        </div>
      </div>
    </section>
  );
}

function Lfo() {
  return (
    <section className="flex flex-1 overflow-hidden rounded-t-lg border-t-2 border-[#6b4a1a] bg-[#ff9300] text-black">
      <div className="w-[47px] border-r-2 border-[#6b4a1a] bg-[#db7d00] pt-3 pl-[13px]">
        <button aria-label="LFO menu" className={clsx(smallBtn, "h-[22px] w-5")}>
          <svg viewBox="0 0 12 13" className="h-[13px] w-3 stroke-black" strokeWidth="2">
            <path d="M0 1H12M0 5H12M0 8H12M0 12H12" />
          </svg>
        </button>
      </div>
      <div className="w-[297px] pt-[9px] pl-[18px]">
        <div className="w-[279px]">
          <Slider label="Rate" value={0.58} tone="mod" />
          <Slider label="Phase" value={0} />
        </div>
      </div>
      <div className="ml-[21px] w-[106px] pt-3">
        <div className="flex flex-col divide-y-2 divide-[#aaa] rounded-md border-2 border-[#a2a2a4] bg-[#e4e4e5] p-0.5">
          {["Freerun", "Keytrigger", "Random"].map((m, i) => (
            <button key={m} className={clsx("h-[25px] text-base leading-4 font-bold", i === 1 && "bg-[#ff9e1a]")}>
              {m}
            </button>
          ))}
        </div>
      </div>
      <div className="ml-[29px] w-[106px] pt-3">
        <div className="grid grid-cols-2 gap-0.5 overflow-hidden rounded-md border-2 border-[#a2a2a4] bg-[#a2a2a4]">
          {["M1 12C6 -2 13 -2 18 9S30 24 35 9", "M1 15L10 3L27 20L35 8", "M1 20V3H18V20H35V3", "M1 20V3L16 20V3L32 20"].map((d, i) => (
            <button
              key={d}
              aria-label={["Sine", "Triangle", "Square", "Sawtooth"][i]}
              className={clsx("flex h-[30px] items-center justify-center", i === 1 ? "bg-[#ff9e1a]" : "bg-[#e4e4e5]")}
            >
              <svg viewBox="0 0 36 22" className="h-[22px] w-9 fill-none stroke-black" strokeWidth="2">
                <path d={d} />
              </svg>
            </button>
          ))}
        </div>
      </div>
      <div className="min-w-0 flex-1 px-9 pt-5">
        <svg viewBox="0 0 616 44" preserveAspectRatio="none" className="h-11 w-full">
          <path d="M2 2H616" stroke="#d07c0a" strokeWidth="2" />
          <path d="M0 19H616M0 37H616" stroke="#c97708" strokeWidth="2" strokeDasharray="2 8.500" />
          <path d="M40 44L50 2L150 38" fill="none" stroke="#b56a00" strokeWidth="2" />
          <path
            d="M51 44L54 3L57 44M68 44L71 9L74 44M85 44L87 15L90 44M101 44L103 22L106 44M118 44L120 28L122 44M134 44L136 34L138 44"
            fill="#000"
            stroke="#000"
            strokeWidth="1"
          />
        </svg>
      </div>
      <div className="w-[297px] pt-0.5">
        <div className="flex items-center pr-3.5">
          <span className="ml-2.5 h-[3px] w-14 bg-black" />
          <h2 className={clsx(title, "flex-1 text-center")}>LFO EG</h2>
          <span className="mr-3 h-[3px] w-14 bg-black" />
        </div>
        <div className="mt-[9px] flex gap-3.5 pl-[23px]">
          {["Delay", "Attack", "Hold", "Decay", "Sustain", "Release"].map((n) => (
            <Fader key={n} name={`LFO ${n}`} label="" value={n === "Release" ? 1 : 0} tone="light" />
          ))}
        </div>
      </div>
    </section>
  );
}

const EFFECT_X = [1653, 1702, 1751, 1800];

function FxBox({ x, y, name, w = 39 }: { x: number; y: number; name?: string; w?: number }) {
  const lit = name === "A" || name === "B" || name === "DLY";
  return (
    <g>
      <rect x={x} y={y} width={w} height="22" fill={lit ? "#fff" : "#949597"} stroke="#000" strokeWidth="2" />
      {name ? (
        <text x={x + w / 2} y={y + 17} textAnchor="middle" fontSize="17" fill={lit ? "#222" : "#f0f0f0"}>
          {name}
        </text>
      ) : (
        <path d={`M${x + 13} ${y + 11}h13`} stroke="#fff" strokeWidth="3" />
      )}
    </g>
  );
}

function FxGrid() {
  const down = (x: number, y: number) => `M${x - 4} ${y - 7}h8L${x} ${y}Z`;
  const up = (x: number, y: number) => `M${x - 4} ${y + 7}h8L${x} ${y}Z`;
  const right = (x: number, y: number) => `M${x - 6} ${y - 4}v8L${x} ${y}Z`;
  return (
    <svg viewBox="1627 158 292 124" className="block h-[124px] w-[292px]">
      <g fill="none" stroke="#000" strokeWidth="2">
        <path d="M1647 172H1801M1647 268H1801M1839 172H1856V268H1839M1672 202V195H1856M1672 237V244H1856M1721 195V202M1770 195V202M1819 195V202M1721 244V237M1770 244V237M1819 244V237M1839 220.500H1868V172H1872" />
        <path d="M1693 220.500H1800" strokeDasharray="2 2" />
        <path d="M1896 172V260" />
      </g>
      {[172, 268].map((y) => (
        <path key={y} d={EFFECT_X.slice(1).map((x) => right(x, y)).join("")} />
      ))}
      <path d={[1672, 1721, 1770, 1819].map((x) => down(x, 209) + up(x, 232)).join("") + down(1856, 213) + up(1856, 229)} />
      <path d={right(1848, 220.5) + right(1876, 172) + down(1896, 191) + down(1896, 223) + down(1896, 256)} />
      <FxBox x={1630} y={161} w={17} name="A" />
      <FxBox x={1630} y={257} w={17} name="B" />
      {EFFECT_X.map((x, i) => (
        <g key={x}>
          <FxBox x={x} y={161} name={["DLY", "EQ"][i]} />
          <FxBox x={x} y={209} name={i === 0 ? "RV1" : undefined} />
          <FxBox x={x} y={257} />
        </g>
      ))}
      {[161, 193, 225, 257].map((y) => (
        <FxBox key={y} x={1877} y={y} />
      ))}
      <circle cx="1856" cy="220.500" r="7.500" fill="#fff" stroke="#000" strokeWidth="2" />
      <path d="M1851 220.500H1861M1856 215.500V225.500" stroke="#000" strokeWidth="2" />
    </svg>
  );
}

function Heading({ children, first }: { children: string; first?: boolean }) {
  return (
    <h3
      className={clsx(
        "mb-[7px] ml-[5px] border-b-[6px] border-[#6a6b6d] text-[19px] leading-5 text-[#68696c]",
        first ? "pt-0" : "pt-[9px]"
      )}
    >
      {children}
    </h3>
  );
}

function Effects() {
  return (
    <aside className="flex h-full w-[306px] shrink-0 flex-col overflow-hidden border-t-[3px] border-[#999]">
      <div className="h-[136px] shrink-0 pt-0.5 pr-[15px] pl-[13px]">
        <h2 className="mb-[11px] pl-4 text-center text-[21px] leading-5 font-bold">Output</h2>
        <div className="mr-2 ml-2.5 flex h-[26px] flex-col justify-center gap-0.5 rounded-sm bg-[#151515] pl-1.5">
          <span className="h-[7px] w-[56%] bg-linear-to-r from-[#3f9bfb] to-[#cf9a4c]" />
          <span className="h-[7px] w-[55%] bg-linear-to-r from-[#3f9bfb] to-[#cf9a4c]" />
        </div>
        <div className="mt-[13px]">
          <Slider label="Global Volume" value={1} />
        </div>
      </div>
      <div className="ml-1.5 h-1 shrink-0 bg-[#a0a0a3]" />
      <div className="flex h-[266px] shrink-0 flex-col pt-[15px] pr-2 pl-[19px]">
        <div className="-mr-2 -ml-1.5">
          <FxGrid />
        </div>
        <div className="mt-[31px]">
          <Slider label="Send FX 1 Return" value={1} />
          <Slider label="Send FX 2 Return" value={1} />
        </div>
      </div>
      <div className="ml-1.5 h-1 shrink-0 bg-[#a0a0a3]" />
      <div className="shrink-0 pt-1.5 pr-2 pl-[19px]">
        <div className="mr-0.5 ml-0.5 flex h-[31px] items-center justify-between rounded-sm border-2 border-[#a2a2a4] bg-[#f0f0f1] px-1.5 text-[19px] leading-6">
          <label htmlFor="effect">A Insert FX 1</label>
          <span className="flex items-center gap-1">
            <select id="effect" className="appearance-none bg-transparent text-right">
              <option>Delay</option>
            </select>
            <Caret />
          </span>
        </div>
        <PrevNext name="effect" className="mt-1 ml-auto" />
        <Heading first>Input</Heading>
        <Slider className="h-[43px]" label="Channel" value={0} bipolar midTick />
        <Heading>Delay Time</Heading>
        <Slider className="h-[43px]" label="Left" value={0.535} sync />
        <Slider className="h-[43px]" label="Right" value={0.535} sync />
        <Heading>Feedback/EQ</Heading>
        <Slider className="h-[43px]" label="Feedback" value={0} />
        <Slider className="h-[43px]" label="Crossfeed" value={0.838} />
        <Slider className="h-[43px]" label="Low Cut" value={0.356} />
        <Slider className="h-[43px]" label="High Cut" value={0.795} />
        <Heading>Modulation</Heading>
        <Slider className="h-[43px]" label="Rate" value={0.367} />
        <Slider className="h-[43px]" label="Depth" value={0.208} />
        <Heading>Output</Heading>
        <Slider className="h-[43px]" label="Mix" value={0.626} bipolar midTick />
      </div>
    </aside>
  );
}

const SideTab = ({ children, className }: { children: string; className: string }) => (
  <span
    className={clsx(
      "flex w-[15px] shrink-0 items-center overflow-hidden text-[15px] leading-[15px] font-bold text-[#111] [writing-mode:vertical-rl]",
      className
    )}
  >
    {children}
  </span>
);

export default function App() {
  return (
    <div className="flex h-screen w-full overflow-hidden border-l-2 border-[#8f8f94] bg-[#cecfd5] font-[Lato,sans-serif] text-black">
      <main className="flex min-w-0 flex-1 flex-col">
        <Header />
        <div className="rounded-tr-2xl bg-[#979797]">
          <div className="h-3.5 pl-[3px] text-[15px] leading-[14px] font-black">SCENE</div>
          <div className="flex">
            <div className="grid min-w-0 flex-1 grid-cols-5 grid-rows-[264px_144px_286px] gap-x-1.5 gap-y-[5px] rounded-tr-lg bg-black pt-1.5 pr-[5px] pb-1 text-white">
              <div className="contents text-black">
                <Oscillator />
              </div>
              <PlayMode />
              <Routing />
              <SceneOutput />
              <div className="contents text-black">
                <ScenePitch />
                <Filters />
              </div>
              <Mixer />
              <Keytrack />
              <FilterEg />
              <AmpEg />
            </div>
            <SideTab className="justify-end pb-1.5">SCENE</SideTab>
          </div>
        </div>
        <div className="flex">
          <div className="min-w-0 flex-1 bg-black pr-[5px] pb-1">
            <Route />
          </div>
          <SideTab className="mb-1 justify-center bg-[#4287f5]">ROUTE</SideTab>
        </div>
        <div className="flex min-h-0 flex-1">
          <div className="flex min-w-0 flex-1 bg-black pr-[5px] pl-px">
            <Lfo />
          </div>
          <SideTab className="bg-[#ff9300] pt-12">MODULATE</SideTab>
        </div>
      </main>
      <Effects />
    </div>
  );
}
